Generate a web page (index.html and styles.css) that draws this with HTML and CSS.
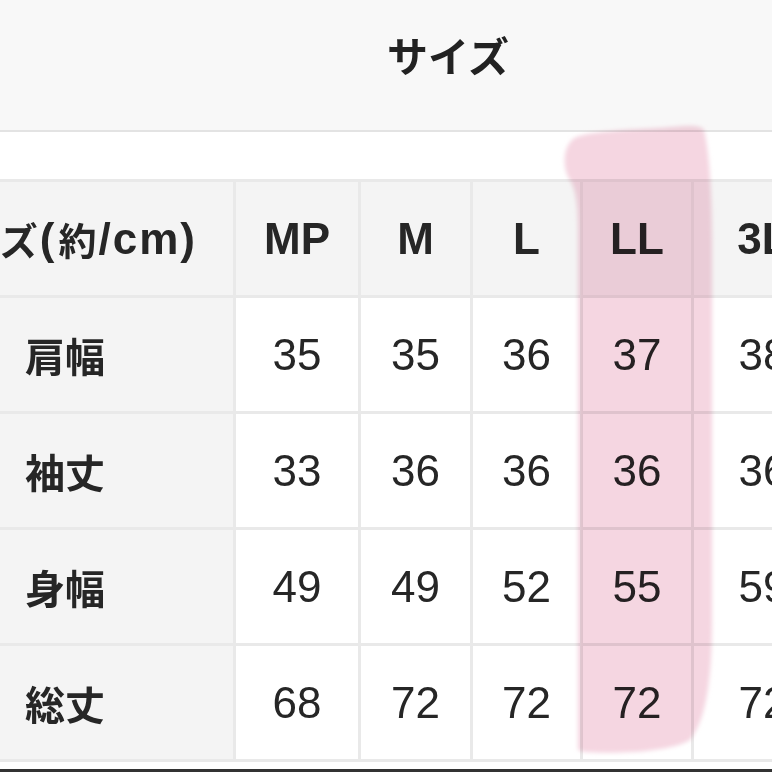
FILE: index.html
```html
<!DOCTYPE html>
<html lang="ja">
<head>
<meta charset="utf-8">
<title>サイズ</title>
<link rel="stylesheet" href="styles.css">
</head>
<body>
<div class="page">
  <header class="title-bar"><h1 class="title">サイズ</h1></header>
  <div class="spacer"></div>
  <div class="size-table">
    <div class="cell head corner"><span class="jp">サイズ</span>(<span class="jp">約</span>/cm)</div>
    <div class="cell head">MP</div>
    <div class="cell head">M</div>
    <div class="cell head">L</div>
    <div class="cell head">LL</div>
    <div class="cell head">3L</div>

    <div class="cell label">肩幅</div>
    <div class="cell num">35</div>
    <div class="cell num">35</div>
    <div class="cell num">36</div>
    <div class="cell num">37</div>
    <div class="cell num">38</div>

    <div class="cell label">袖丈</div>
    <div class="cell num">33</div>
    <div class="cell num">36</div>
    <div class="cell num">36</div>
    <div class="cell num">36</div>
    <div class="cell num">36</div>

    <div class="cell label">身幅</div>
    <div class="cell num">49</div>
    <div class="cell num">49</div>
    <div class="cell num">52</div>
    <div class="cell num">55</div>
    <div class="cell num">59</div>

    <div class="cell label">総丈</div>
    <div class="cell num">68</div>
    <div class="cell num">72</div>
    <div class="cell num">72</div>
    <div class="cell num">72</div>
    <div class="cell num">72</div>
  </div>
  <div class="bottom-line"></div>

  <svg class="marker" width="772" height="772" viewBox="0 0 772 772" aria-hidden="true">
    <defs>
      <filter id="soft" x="-10%" y="-10%" width="120%" height="120%">
        <feGaussianBlur stdDeviation="2"/>
      </filter>
    </defs>
    <path filter="url(#soft)" fill="#f5d6e1"
      d="M572 140 C580 132 620 130 660 128 C685 126 700 124 704 130
         C709 150 712 190 712 240 L712 620 C712 680 706 720 690 740
         C670 752 620 754 584 752 L578 750 L578 230 C578 205 576 190 570 180
         C563 170 562 150 572 140 Z"/>
  </svg>
</div>
</body>
</html>
```
FILE: styles.css
```css
html, body {
  margin: 0;
  padding: 0;
  background: #ffffff;
}
body {
  width: 772px;
  height: 772px;
  overflow: hidden;
  font-family: "Liberation Sans", Arial, "Noto Sans CJK JP", sans-serif;
  color: #262626;
}
.page {
  position: relative;
  width: 772px;
  height: 772px;
  overflow: hidden;
}
.title-bar {
  height: 130px;
  background: #f8f8f8;
  border-bottom: 2px solid #e3e3e3;
  display: flex;
  justify-content: center;
  align-items: flex-start;
  padding-left: 124px;
  box-sizing: content-box;
}
.title {
  margin: 0;
  padding-top: 30px;
  font-family: "Noto Sans CJK JP", sans-serif;
  font-weight: 700;
  font-size: 41px;
  line-height: 48px;
  color: #222;
}
.spacer {
  height: 47px;
  background: #ffffff;
}
.size-table {
  margin-left: -106px;
  width: fit-content;
  display: grid;
  grid-template-columns: 336px 122px 109px 107px 108px 138px;
  grid-auto-rows: 113px;
  gap: 3px;
  padding: 3px;
  background: #e9e9e9;
}
.cell {
  display: flex;
  align-items: center;
  justify-content: center;
  background: #ffffff;
  white-space: nowrap;
}
.head {
  background: #f4f4f4;
  font-weight: 700;
  font-size: 44px;
}
.label {
  background: #f4f4f4;
  font-family: "Noto Sans CJK JP", sans-serif;
  font-weight: 700;
  font-size: 40px;
}
.corner {
  justify-content: flex-end;
  padding-right: 36px;
  letter-spacing: 2px;
}
.corner .jp {
  font-family: "Noto Sans CJK JP", sans-serif;
  font-size: 38px;
  letter-spacing: 0;
  margin: 0 2px;
}
.num {
  font-size: 44px;
  font-weight: 400;
}
.bottom-line {
  margin-top: 7px;
  height: 3px;
  background: #333333;
}
.marker {
  position: absolute;
  left: 0;
  top: 0;
  pointer-events: none;
  mix-blend-mode: multiply;
}
```
